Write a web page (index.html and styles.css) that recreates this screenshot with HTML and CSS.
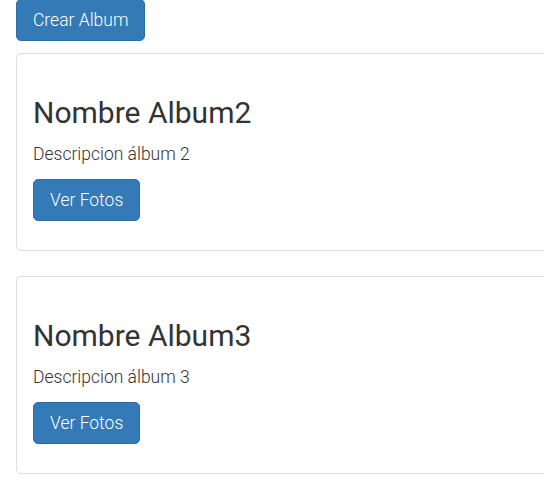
FILE: index.html
```html
<!DOCTYPE html>
<html lang="es">
<head>
<meta charset="utf-8">
<title>Albumes</title>
<link rel="stylesheet" href="styles.css">
</head>
<body>
<div class="page">
  <div class="toolbar"><a class="btn" href="#">Crear Album</a></div>
  <div class="thumbnail">
    <div class="caption">
      <h3>Nombre Album2</h3>
      <p class="desc">Descripcion álbum 2</p>
      <p class="actions"><a class="btn" href="#">Ver Fotos</a></p>
    </div>
  </div>
  <div class="thumbnail">
    <div class="caption">
      <h3>Nombre Album3</h3>
      <p class="desc">Descripcion álbum 3</p>
      <p class="actions"><a class="btn" href="#">Ver Fotos</a></p>
    </div>
  </div>
</div>
</body>
</html>
```

FILE: styles.css
```css
html, body {
  margin: 0;
  padding: 0;
  overflow: hidden;
  background: #fff;
}
body {
  font-family: Roboto, "Liberation Sans", sans-serif;
  font-weight: 300;
  font-size: 17.5px;
  line-height: 25px;
  color: #333;
}
.page {
  padding-left: 16px;
  margin-top: -1px;
  width: 640px;
}
.toolbar {
  display: flex;
  margin-bottom: 12px;
}
.btn {
  display: inline-block;
  box-sizing: border-box;
  height: 42px;
  padding: 8px 16px;
  border: 1px solid #2e6da4;
  border-radius: 5px;
  background: #337ab7;
  color: #fff;
  text-decoration: none;
  font-size: 17.5px;
  line-height: 24px;
  font-weight: 300;
}
.thumbnail {
  border: 1px solid #ddd;
  border-radius: 5px;
  padding: 5px;
  margin-bottom: 25px;
  background: #fff;
}
.caption {
  padding: 12px 12px 12px 11px;
}
.caption h3 {
  margin: 25px 0 13px;
  font-size: 30px;
  line-height: 33px;
  font-weight: 400;
  color: #333;
}
.desc {
  margin: 0 0 12px;
}
.actions {
  margin: 0 0 12px;
  display: flex;
}
```
